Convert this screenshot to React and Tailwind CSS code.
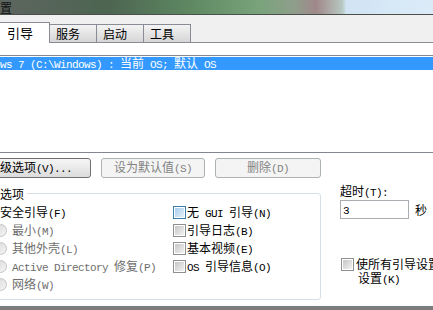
import React from 'react';

// split a label into ascii runs (mono, half width) and cjk runs
function T({ text, className = '' }) {
  const parts = text.split(/([\x20-\x7e]+)/).filter(Boolean);
  return (
    <span className={`whitespace-pre ${className}`}>
      {parts.map((p, i) =>
        /^[\x20-\x7e]+$/.test(p) ? (
          <span key={i} className="font-['Liberation_Mono',monospace] text-[11px] tracking-[-0.6px]">{p}</span>
        ) : (
          <span key={i}>{p}</span>
        )
      )}
    </span>
  );
}

function Check({ blue }) {
  return (
    <span
      className={`w-[13px] h-[13px] shrink-0 border flex items-center justify-center bg-white ${
        blue ? 'border-[#3c7fb1]' : 'border-[#8e8f8f]'
      }`}
    >
      <span
        className={`w-[9px] h-[9px] ${
          blue ? 'bg-linear-to-br from-[#a9cdeb] to-[#e4f0fa]' : 'bg-linear-to-br from-[#c6c6c6] to-[#f2f2f2]'
        }`}
      />
    </span>
  );
}

function Radio() {
  return (
    <span className="w-[13px] h-[13px] shrink-0 rounded-full border border-[#c4c4c4] bg-linear-to-br from-[#d8d8d8] to-[#f6f6f6]" />
  );
}

function Button({ label, disabled, className }) {
  return (
    <div
      className={`h-[20px] rounded-[3px] border flex items-center justify-center ${
        disabled
          ? 'border-[#adb2b5] bg-[#f4f4f4] text-[#838383]'
          : 'border-[#707070] bg-linear-to-b from-[#f6f6f6] to-[#dcdcdc] text-black'
      } ${className}`}
    >
      <T text={label} />
    </div>
  );
}

export default function App() {
  return (
    <div className="w-[433px] h-[310px] overflow-hidden bg-white font-['Noto_Sans_CJK_SC',sans-serif] text-[12px] leading-[13px] text-black flex flex-col">
      {/* title bar */}
      <div className="h-[15px] shrink-0 border-b border-[#4a4f4a] flex items-center bg-[linear-gradient(90deg,#5d655f_0%,#4d6551_25%,#5f8a63_45%,#79a47b_60%,#8f9e8b_68%,#a0888a_73%,#b7c8c2_79%,#d1e4f4_80%,#dcebf8_100%)]">
        <span className="-ml-[36px] whitespace-nowrap text-[#111]">系统配置</span>
      </div>

      {/* tabs */}
      <div className="h-[28px] shrink-0 bg-[#f0f0f0] border-b border-[#898c95] flex items-end">
        <div className="relative z-10 -ml-px -mb-px w-[51px] h-[21px] bg-white border border-b-0 border-[#898c95] pl-[7px] pt-[3px] leading-[14px] text-[13px]">
          引导
        </div>
        <div className="-ml-px w-[48px] h-[18px] border border-b-0 border-[#898c95] bg-linear-to-b from-[#f3f3f3] to-[#d6d6d6] pl-[6px] pt-[2px] leading-[14px]">
          服务
        </div>
        <div className="-ml-px w-[48px] h-[18px] border border-b-0 border-[#898c95] bg-linear-to-b from-[#f3f3f3] to-[#d6d6d6] pl-[6px] pt-[2px] leading-[14px]">
          启动
        </div>
        <div className="-ml-px w-[48px] h-[18px] border border-b-0 border-[#898c95] bg-linear-to-b from-[#f3f3f3] to-[#d6d6d6] pl-[6px] pt-[2px] leading-[14px]">
          工具
        </div>
      </div>

      {/* panel */}
      <div className="flex-1 flex flex-col">
        {/* os list */}
        <div className="mt-[12px] -ml-[40px] w-[520px] h-[98px] shrink-0 border-y border-l border-[#828790]">
          <div className="mt-px h-[13px] bg-[#3399ff] text-white pl-[9px] flex items-center">
            <T text="Windows 7 (C:\Windows) : 当前 OS; 默认 OS" />
          </div>
        </div>

        {/* buttons */}
        <div className="mt-[5px] flex shrink-0">
          <Button label="高级选项(V)..." className="-ml-[31px] w-[122px]" />
          <Button label="设为默认值(S)" disabled className="ml-[10px] w-[104px]" />
          <Button label="删除(D)" disabled className="ml-[10px] w-[106px]" />
        </div>

        {/* options */}
        <div className="flex shrink-0">
          <div className="relative mt-[15px] -ml-[40px] w-[361px] h-[107px] shrink-0 border border-[#d5dfe5] rounded-[3px] flex pt-[12px]">
            <span className="absolute left-[15px] -top-[7px] bg-white pr-[3px] leading-[13px]">引导选项</span>

            <div className="w-[212px] shrink-0 pl-[22px] flex flex-col gap-[5px]">
              <div className="h-[13px] flex items-center gap-[4px]">
                <Check />
                <T text="安全引导(F)" />
              </div>
              {['最小(M)', '其他外壳(L)', 'Active Directory 修复(P)', '网络(W)'].map((l) => (
                <div key={l} className="h-[13px] flex items-center gap-[5px] pl-[11px] text-[#6d6d6d]">
                  <Radio />
                  <T text={l} />
                </div>
              ))}
            </div>

            <div className="flex flex-col gap-[5px]">
              {['无 GUI 引导(N)', '引导日志(B)', '基本视频(E)', 'OS 引导信息(O)'].map((l, i) => (
                <div key={l} className="h-[13px] flex items-center gap-px">
                  <Check blue={i === 0} />
                  <T text={l} />
                </div>
              ))}
            </div>
          </div>

          <div className="ml-[19px] flex flex-col">
            <div className="mt-[6px] h-[13px]">
              <T text="超时(T):" />
            </div>
            <div className="mt-[3px] flex items-center">
              <div className="w-[69px] h-[19px] border border-[#abadb3] bg-white pl-[2px] flex items-center">
                <T text="3" />
              </div>
              <span className="ml-[6px]">秒</span>
            </div>
            <div className="mt-[39px] flex items-start gap-[2px] pl-px">
              <Check />
              <div className="flex flex-col -mt-px">
                <span className="whitespace-nowrap leading-[14px]">使所有引导设置成为永久</span>
                <span className="pl-[2px] leading-[14px]">
                  <T text="设置(K)" />
                </span>
              </div>
            </div>
          </div>
        </div>
      </div>

      {/* bottom edge */}
      <div className="h-[4px] shrink-0 bg-[#7c7c7c]" />
    </div>
  );
}
